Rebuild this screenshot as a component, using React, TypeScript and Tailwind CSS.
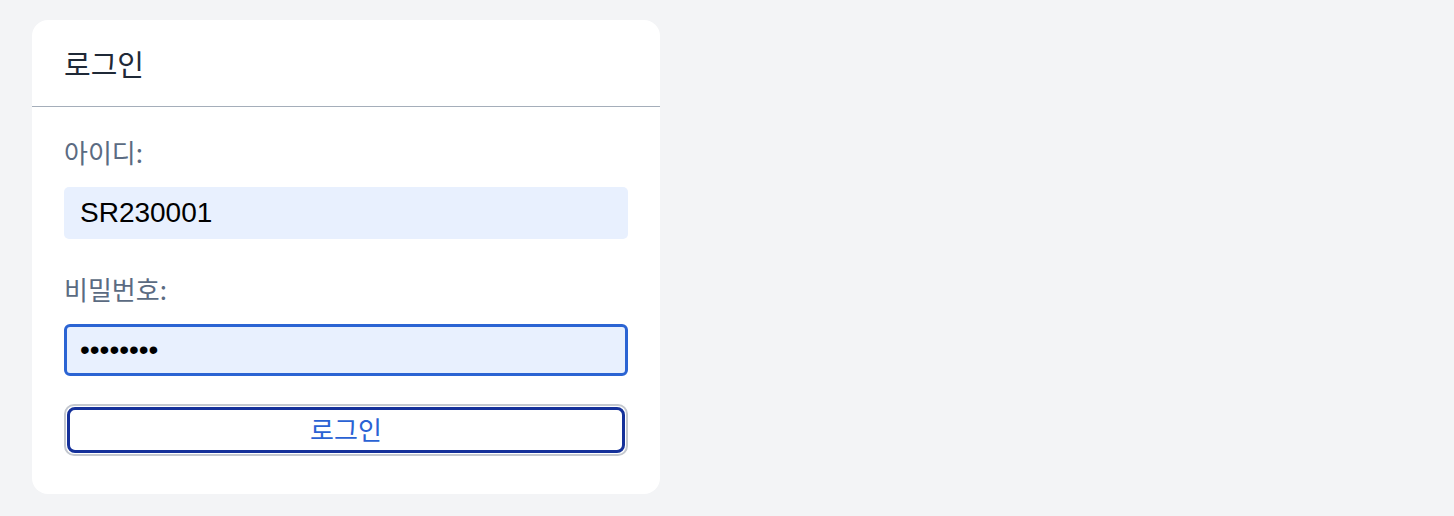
import { useState } from "react";

const App = () => {
  const [userId, setUserId] = useState("SR230001");
  const [password, setPassword] = useState("12345678");

  return (
    <div className="min-h-screen bg-[#f3f4f6] pt-5 pl-8">
      <div className="w-[628px] rounded-2xl bg-white">
        <div className="flex h-[87px] items-center border-b border-[#a5aeba] px-8">
          <h1 className="font-['Noto_Sans_CJK_KR','Noto_Sans',sans-serif] text-[29px] leading-none text-[#1f2937]">
            로그인
          </h1>
        </div>
        <form className="flex flex-col px-8 pt-[28px] pb-[38px]" onSubmit={(e) => e.preventDefault()}>
          <label className="mb-[18px] h-[34px] font-['Noto_Sans_CJK_KR','Noto_Sans',sans-serif] text-[26px] leading-[34px] text-[#5b6b82]">
            아이디:
          </label>
          <input
            value={userId}
            onChange={(e) => setUserId(e.target.value)}
            className="h-[52px] w-full rounded-[5px] bg-[#e8f0fe] px-4 font-['Liberation_Sans',Arial,sans-serif] text-[28px] text-black outline-none"
          />
          <label className="mt-[33px] mb-[18px] h-[34px] font-['Noto_Sans_CJK_KR','Noto_Sans',sans-serif] text-[26px] leading-[34px] text-[#5b6b82]">
            비밀번호:
          </label>
          <input
            type="password"
            value={password}
            onChange={(e) => setPassword(e.target.value)}
            className="h-[52px] w-full rounded-[6px] border-[3px] border-[#2b64d3] bg-[#e8f0fe] px-[13px] font-['Liberation_Sans',Arial,sans-serif] text-[28px] text-black outline-none"
          />
          <button
            type="submit"
            className="mt-7 h-[52px] w-full rounded-[10px] border-2 border-[#c4c8cf] bg-white p-[1px]"
          >
            <span className="flex h-full w-full items-center justify-center rounded-[8px] border-[3px] border-[#15319a] pb-[3px] font-['Noto_Sans_CJK_KR','Noto_Sans',sans-serif] text-[26px] leading-none text-[#2a62d4]">
              로그인
            </span>
          </button>
        </form>
      </div>
    </div>
  );
};

export default App;
